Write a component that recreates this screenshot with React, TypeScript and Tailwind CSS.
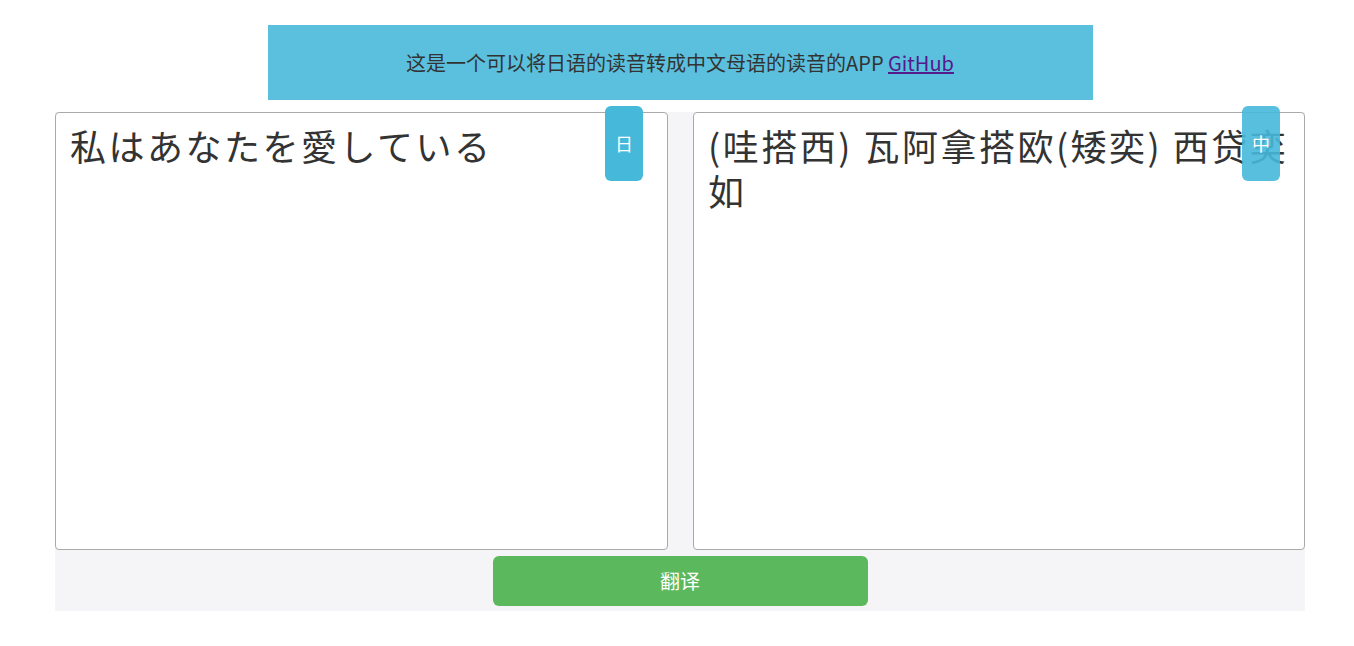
import React from "react";

export default function App() {
  const ff = { fontFamily: '"Noto Sans CJK SC", "Noto Sans", sans-serif' };
  return (
    <div className="w-full bg-white pl-[6px] pt-[25px] pb-[35px]" style={ff}>
      <div className="mx-auto flex h-[75px] w-[825px] items-center justify-center bg-[#5bc0de] text-[20px] text-[#333] [font-family:'Noto_Sans_CJK_SC',sans-serif]">
        <span>
          这是一个可以将日语的读音转成中文母语的读音的APP{" "}
          <a href="#" className="text-[#551a8b] underline">
            GitHub
          </a>
        </span>
      </div>
      <div className="mx-auto mt-[12px] w-[1250px] bg-[#f5f5f7] pb-[5px]">
        <div className="flex gap-[25px]">
          <div className="relative h-[438px] w-[613px]">
            <textarea
              readOnly
              value="私はあなたを愛している"
              className="h-full w-full resize-none rounded-[4px] border border-[#a9a9a9] bg-white px-[14px] py-[10px] text-[36px] leading-[45px] tracking-[2.5px] text-[#333] outline-none [font-family:'Noto_Sans_CJK_JP',sans-serif]"
            />
            <div className="absolute right-[25px] top-[-6px] flex h-[75px] w-[38px] items-center justify-center rounded-[6px] bg-[#46b8da] text-[18px] text-white">
              日
            </div>
          </div>
          <div className="relative h-[438px] w-[612px]">
            <textarea
              readOnly
              value="(哇搭西) 瓦阿拿搭欧(矮奕) 西贷奕如"
              className="h-full w-full resize-none rounded-[4px] border border-[#a9a9a9] bg-white px-[14px] py-[10px] text-[36px] leading-[45px] tracking-[2.5px] text-[#333] outline-none [font-family:'Noto_Sans_CJK_SC',sans-serif]"
            />
            <div className="absolute right-[25px] top-[-6px] flex h-[75px] w-[38px] items-center justify-center rounded-[6px] bg-[#46b8da]/90 text-[18px] text-white">
              中
            </div>
          </div>
        </div>
        <div className="mt-[6px] flex justify-center">
          <button className="h-[50px] w-[375px] rounded-[6px] bg-[#5cb85c] text-[20px] text-white">
            翻译
          </button>
        </div>
      </div>
    </div>
  );
}
